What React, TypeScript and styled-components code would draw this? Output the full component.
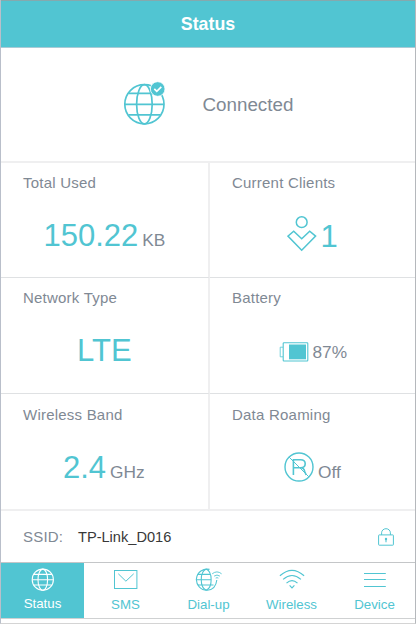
import React from "react";
import styled, { createGlobalStyle } from "styled-components";

const teal = "#51c5d2";
const grey = "#7f8994";

const GlobalStyle = createGlobalStyle`
  * { box-sizing: border-box; }
  body { margin: 0; background: #fff; font-family: "Liberation Sans", Arial, sans-serif; }
  svg { display: block; flex: none; }
`;

const Screen = styled.div`
  width: 416px;
  height: 624px;
  display: flex;
  flex-direction: column;
  border-left: 1px solid #b9bfca;
  border-right: 1px solid #b5b8bc;
  border-bottom: 1px solid #d4d4d4;
  background: #fff;
  white-space: nowrap;
  overflow: hidden;
`;

const Header = styled.header`
  height: 48px;
  border-top: 1px solid #85a9ae;
  border-bottom: 1px solid #a9cbd6;
  background: ${teal};
  color: #fff;
  font-size: 17.8px;
  font-weight: bold;
  line-height: 46px;
  text-align: center;
`;

const Connection = styled.section`
  height: 113px;
  display: flex;
  align-items: center;
  padding-left: 122px;

  svg { margin-bottom: 4px; }
`;

const ConnectionLabel = styled.span`
  margin-left: 35.5px;
  font-size: 18.8px;
  color: ${grey};
`;

const Grid = styled.main`
  height: 350px;
  display: grid;
  grid-template-columns: 209px 1fr;
  grid-template-rows: 115px 116px 115px;
  border-top: 2px solid #efeff0;
  border-bottom: 2px solid #efeff0;
`;

const Cell = styled.section<{ $right?: boolean; $last?: boolean }>`
  display: flex;
  flex-direction: column;
  padding: ${(p) => (p.$last ? 12 : 11)}px 0 0 22px;
  border-right: ${(p) => (p.$right ? "0" : "2px solid #efeff0")};
  border-bottom: ${(p) => (p.$last ? "0" : "1px solid #dfe1e3")};
`;

const CellTitle = styled.h2`
  margin: 0;
  font-size: 15px;
  font-weight: normal;
  line-height: 18px;
  letter-spacing: 0.22px;
  color: ${grey};
`;

const Reading = styled.div<{ $indent: number; $top?: number; $align?: string }>`
  display: flex;
  align-items: ${(p) => p.$align ?? "baseline"};
  margin-top: ${(p) => p.$top ?? 26}px;
  padding-left: ${(p) => p.$indent}px;
`;

const Big = styled.span<{ $gap?: number; $drop?: number }>`
  margin-left: ${(p) => p.$gap ?? 0}px;
  padding-top: ${(p) => p.$drop ?? 0}px;
  font-size: 31px;
  line-height: 35px;
  color: ${teal};
`;

const Unit = styled.span<{ $gap?: number; $drop?: number }>`
  margin-left: ${(p) => p.$gap ?? 4}px;
  padding-top: ${(p) => p.$drop ?? 0}px;
  font-size: 17.3px;
  line-height: 20px;
  color: ${grey};
`;

const SsidRow = styled.section`
  height: 51px;
  display: flex;
  align-items: center;
  padding: 0 21px 0 22px;
`;

const SsidLabel = styled.span`
  width: 55px;
  font-size: 15px;
  letter-spacing: 0.2px;
  color: ${grey};
`;

const SsidName = styled.span`
  flex: 1;
  font-size: 14.6px;
  color: #383838;
`;

const TabBar = styled.nav`
  height: 57px;
  display: grid;
  grid-template-columns: repeat(5, 83px);
  border-top: 1px solid #c4c6c8;
  border-bottom: 1px solid #cfd1d2;
`;

const Tab = styled.a<{ $active?: boolean }>`
  display: flex;
  flex-direction: column;
  align-items: center;
  padding-top: 5px;
  background: ${(p) => (p.$active ? teal : "#fff")};
  color: ${(p) => (p.$active ? "#fff" : teal)};
`;

const TabLabel = styled.span<{ $active?: boolean }>`
  margin-top: ${(p) => (p.$active ? 4 : 5)}px;
  font-size: 13.3px;
  line-height: 16px;
`;

const ConnectedGlobe = () => (
  <svg width="44" height="46" viewBox="0 0 44 46" fill="none" stroke={teal} strokeWidth="1.7">
    <circle cx="21.4" cy="24.3" r="19.6" />
    <ellipse cx="21.4" cy="24.3" rx="7.8" ry="19.6" />
    <path d="M1.8 24.3H41M5.4 13.3H37.4M5.4 34.8H37.4" />
    <circle cx="34.7" cy="9" r="7.3" fill={teal} stroke="#fff" strokeWidth="0.8" />
    <path d="M31.3 8.8L33.8 11.3L38.3 6.9" stroke="#fff" />
  </svg>
);

const ClientIcon = () => (
  <svg width="30" height="36" viewBox="0 0 30 36" fill="none" stroke={teal} strokeWidth="1.5">
    <circle cx="14.7" cy="6.2" r="5.4" />
    <path d="M14.7 34.2L.9 20.1L6.7 15.2L14.7 22.7L22.7 15.2L28.6 20.1Z" />
  </svg>
);

const BatteryIcon = () => (
  <svg width="30" height="20" viewBox="0 0 30 20" fill="none" stroke={teal}>
    <rect x="4.2" y=".8" width="24.6" height="18.2" rx=".7" strokeWidth="1.1" />
    <path d="M4 5.2H1.2V14.8H4" strokeWidth=".8" />
    <rect x="10" y="2.5" width="17" height="14.8" fill={teal} stroke="none" />
  </svg>
);

const RoamingOffIcon = () => (
  <svg width="30" height="30" viewBox="0 0 30 30" fill="none" stroke={teal} strokeWidth="1.4">
    <circle cx="15" cy="15" r="14" />
    <path d="M9.4 23V7.8H16.6Q21.2 7.8 21.2 11.7Q21.2 15.7 16.6 15.7H9.4M16.4 15.7Q20 15.7 20.6 19.2L22.2 23" strokeWidth="1.6" />
    <path d="M5.2 5.2L24.8 24.8" strokeWidth="1" />
  </svg>
);

const LockIcon = () => (
  <svg width="16" height="18" viewBox="0 0 16 18" fill="none" stroke={teal}>
    <rect x=".6" y="6.9" width="14.8" height="10.3" rx=".6" />
    <path d="M3.6 6.9V4.8A4.4 4.1 0 0 1 12.4 4.8V6.9" />
    <circle cx="8" cy="11" r="1.2" fill={teal} stroke="none" />
    <path d="M8 11V14.2" strokeWidth="1.1" />
  </svg>
);

const GlobeIcon = () => (
  <svg width="24" height="24" viewBox="0 0 24 24" fill="none" stroke="currentColor" strokeWidth="1.1">
    <circle cx="11.8" cy="11.7" r="10.6" />
    <ellipse cx="11.8" cy="11.7" rx="4.8" ry="10.6" />
    <path d="M1.2 11.7H22.4M2.7 6.4H20.9M2.7 17H20.9" />
  </svg>
);

const MailIcon = () => (
  <svg width="24" height="24" viewBox="0 0 24 24" fill="none" stroke="currentColor" strokeWidth="1">
    <rect x=".5" y="2.5" width="22.4" height="18" />
    <path d="M4.3 5.8L11.9 13.2L19.7 5.8" />
  </svg>
);

const DialUpIcon = () => (
  <svg width="28" height="24" viewBox="0 0 28 24" fill="none" stroke="currentColor" strokeWidth="1.1">
    <path d="M14.5 1.4A10.6 10.6 0 1 0 12.3 22.3Q20.8 21.5 21.8 12" />
    <path d="M11.2 1.1C4.6 4 4.6 19.5 11.2 22.3M11.2 1.1C17.8 4 17.8 19.5 11.2 22.3M.9 11.7H16.3M2.7 6.4H15.4M2.7 17H18.5" />
    <path d="M17.2 5.8Q22 2 26.6 5.8M19.1 8.1Q22 6 24.9 8.1M20.7 10.1Q22 9.3 23.4 10.1" strokeWidth=".9" />
  </svg>
);

const WirelessIcon = () => (
  <svg width="26" height="24" viewBox="0 0 26 24" fill="none" stroke="currentColor" strokeWidth="1.2">
    <path d="M.9 7.8Q13 -3 25.1 7.8M4.1 11.4Q13 3.6 21.9 11.4M7.5 15.1Q13 10 18.5 15.1M10.6 17.4L13 19.8L15.4 17.4" />
  </svg>
);

const MenuIcon = () => (
  <svg width="24" height="24" viewBox="0 0 24 24" fill="none" stroke="currentColor" strokeWidth="1.1">
    <path d="M1 5.5H22.8M1 11.5H22.8M1 18.5H22.8" />
  </svg>
);

const tabs = [
  { label: "Status", Icon: GlobeIcon },
  { label: "SMS", Icon: MailIcon },
  { label: "Dial-up", Icon: DialUpIcon },
  { label: "Wireless", Icon: WirelessIcon },
  { label: "Device", Icon: MenuIcon },
];

export default function App() {
  return (
    <>
      <GlobalStyle />
      <Screen>
        <Header>Status</Header>
        <Connection>
          <ConnectedGlobe />
          <ConnectionLabel>Connected</ConnectionLabel>
        </Connection>
        <Grid>
          <Cell>
            <CellTitle>Total Used</CellTitle>
            <Reading $indent={20.5}>
              <Big>150.22</Big>
              <Unit>KB</Unit>
            </Reading>
          </Cell>
          <Cell $right>
            <CellTitle>Current Clients</CellTitle>
            <Reading $indent={55} $top={22} $align="center">
              <ClientIcon />
              <Big $gap={3.5} $drop={5}>1</Big>
            </Reading>
          </Cell>
          <Cell>
            <CellTitle>Network Type</CellTitle>
            <Reading $indent={54}>
              <Big>LTE</Big>
            </Reading>
          </Cell>
          <Cell $right>
            <CellTitle>Battery</CellTitle>
            <Reading $indent={46.5} $top={35} $align="center">
              <BatteryIcon />
              <Unit $gap={4}>87%</Unit>
            </Reading>
          </Cell>
          <Cell $last>
            <CellTitle>Wireless Band</CellTitle>
            <Reading $indent={40}>
              <Big>2.4</Big>
              <Unit>GHz</Unit>
            </Reading>
          </Cell>
          <Cell $right $last>
            <CellTitle>Data Roaming</CellTitle>
            <Reading $indent={52} $top={28} $align="center">
              <RoamingOffIcon />
              <Unit $drop={9}>Off</Unit>
            </Reading>
          </Cell>
        </Grid>
        <SsidRow>
          <SsidLabel>SSID:</SsidLabel>
          <SsidName>TP-Link_D016</SsidName>
          <LockIcon />
        </SsidRow>
        <TabBar>
          {tabs.map(({ label, Icon }, i) => (
            <Tab key={label} $active={i === 0}>
              <Icon />
              <TabLabel $active={i === 0}>{label}</TabLabel>
            </Tab>
          ))}
        </TabBar>
      </Screen>
    </>
  );
}
